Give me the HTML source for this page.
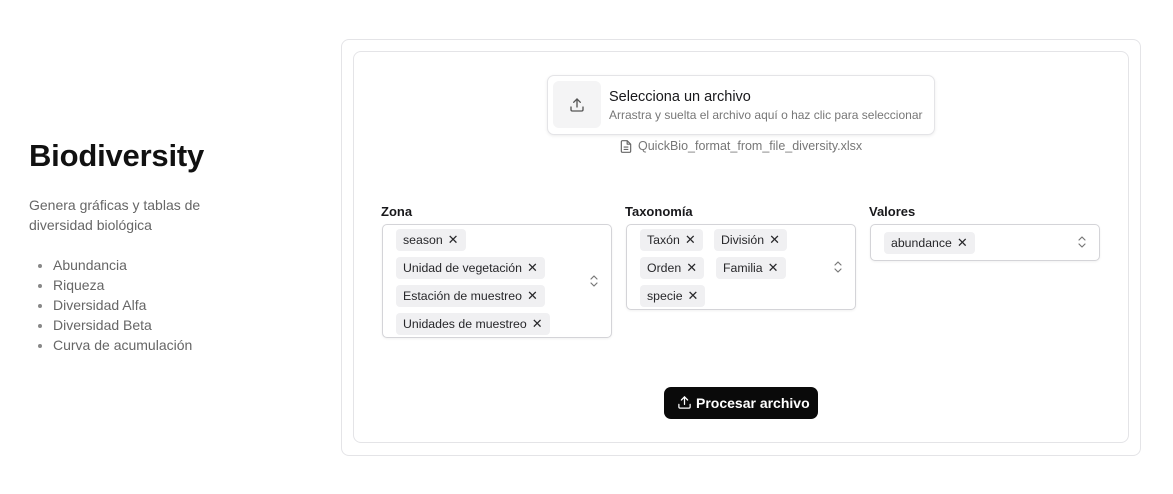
<!DOCTYPE html>
<html><head><meta charset="utf-8"><style>
*{box-sizing:border-box;margin:0;padding:0}
body{width:1173px;height:494px;background:#fff;font-family:"Liberation Sans",sans-serif;color:#18181b;position:relative;overflow:hidden}
.a{position:absolute}
h1{position:absolute;left:29px;top:138px;font-size:31px;font-weight:700;letter-spacing:-0.2px;color:#111}
.p{left:29px;top:195px;font-size:14px;line-height:20px;color:#666}
ul{position:absolute;left:53px;top:255px;font-size:14px;line-height:20px;color:#666}
li::marker{color:#888}
.card{border:1px solid #e4e4e7;border-radius:8px}
.box{border:1px solid #d4d4d8;border-radius:5px;box-shadow:0 1px 2px rgba(0,0,0,.06);background:#fff}
.lbl{font-size:13px;font-weight:700;color:#18181b}
.chip{position:absolute;height:22px;background:#f0f0f2;border-radius:4px;font-size:12.3px;line-height:22px;padding:0 7px;color:#27272a;white-space:nowrap}
.chip b{font-weight:400;margin-left:5px;font-size:13px}
.chev{position:absolute}
</style></head><body>
<h1>Biodiversity</h1>
<div class="a p">Genera gráficas y tablas de<br>diversidad biológica</div>
<ul><li>Abundancia</li><li>Riqueza</li><li>Diversidad Alfa</li><li>Diversidad Beta</li><li>Curva de acumulación</li></ul>

<div class="a card" style="left:341px;top:39px;width:800px;height:417px"></div>
<div class="a card" style="left:353px;top:51px;width:776px;height:392px"></div>

<div class="a box" style="left:547px;top:75px;width:388px;height:60px;border-color:#e4e4e7;border-radius:7px;box-shadow:0 1px 3px rgba(0,0,0,.08)"></div>
<div class="a" style="left:553px;top:81px;width:48px;height:47px;background:#f4f4f5;border-radius:6px"></div>
<svg class="a" style="left:569px;top:97px" width="16" height="16" viewBox="0 0 24 24" fill="none" stroke="#555" stroke-width="2" stroke-linecap="round" stroke-linejoin="round"><path d="M21 15v4a2 2 0 0 1-2 2H5a2 2 0 0 1-2-2v-4"/><path d="M17 8l-5-5-5 5"/><path d="M12 3v12"/></svg>
<div class="a" style="left:609px;top:89px;font-size:14.5px;color:#18181b">Selecciona un archivo</div>
<div class="a" style="left:609px;top:108px;font-size:12px;color:#777">Arrastra y suelta el archivo aquí o haz clic para seleccionar</div>
<svg class="a" style="left:619px;top:139px" width="14" height="15" viewBox="0 0 24 24" fill="none" stroke="#666" stroke-width="2" stroke-linejoin="round"><path d="M14 2H6a2 2 0 0 0-2 2v16a2 2 0 0 0 2 2h12a2 2 0 0 0 2-2V8z"/><path d="M14 2v6h6M8 13h8M8 17h8"/></svg>
<div class="a" style="left:638px;top:139px;font-size:12.5px;color:#777">QuickBio_format_from_file_diversity.xlsx</div>

<div class="a lbl" style="left:381px;top:204px">Zona</div>
<div class="a lbl" style="left:625px;top:204px">Taxonomía</div>
<div class="a lbl" style="left:869px;top:204px">Valores</div>

<div class="a box" style="left:382px;top:224px;width:230px;height:114px"></div>
<div class="chip" style="left:396px;top:229px">season<b>✕</b></div>
<div class="chip" style="left:396px;top:257px">Unidad de vegetación<b>✕</b></div>
<div class="chip" style="left:396px;top:285px">Estación de muestreo<b>✕</b></div>
<div class="chip" style="left:396px;top:313px">Unidades de muestreo<b>✕</b></div>
<svg class="chev" style="left:588px;top:274px" width="12" height="14" viewBox="0 0 12 14" fill="none" stroke="#777" stroke-width="1.2" stroke-linecap="round" stroke-linejoin="round"><path d="M3 5l3-3 3 3M3 9l3 3 3-3"/></svg>

<div class="a box" style="left:626px;top:224px;width:230px;height:86px"></div>
<div class="chip" style="left:640px;top:229px">Taxón<b>✕</b></div>
<div class="chip" style="left:714px;top:229px">División<b>✕</b></div>
<div class="chip" style="left:640px;top:257px">Orden<b>✕</b></div>
<div class="chip" style="left:716px;top:257px">Familia<b>✕</b></div>
<div class="chip" style="left:640px;top:285px">specie<b>✕</b></div>
<svg class="chev" style="left:832px;top:260px" width="12" height="14" viewBox="0 0 12 14" fill="none" stroke="#777" stroke-width="1.2" stroke-linecap="round" stroke-linejoin="round"><path d="M3 5l3-3 3 3M3 9l3 3 3-3"/></svg>

<div class="a box" style="left:870px;top:224px;width:230px;height:37px"></div>
<div class="chip" style="left:884px;top:232px">abundance<b>✕</b></div>
<svg class="chev" style="left:1076px;top:235px" width="12" height="14" viewBox="0 0 12 14" fill="none" stroke="#777" stroke-width="1.2" stroke-linecap="round" stroke-linejoin="round"><path d="M3 5l3-3 3 3M3 9l3 3 3-3"/></svg>

<div class="a" style="left:664px;top:387px;width:154px;height:32px;background:#0a0a0a;border-radius:7px;color:#fff;font-size:14px;font-weight:700;line-height:32px;padding-left:32px">Procesar archivo</div>
<svg class="a" style="left:677px;top:395px" width="15" height="15" viewBox="0 0 24 24" fill="none" stroke="#fff" stroke-width="2" stroke-linecap="round" stroke-linejoin="round"><path d="M21 15v4a2 2 0 0 1-2 2H5a2 2 0 0 1-2-2v-4"/><path d="M17 8l-5-5-5 5"/><path d="M12 3v12"/></svg>
</body></html>
